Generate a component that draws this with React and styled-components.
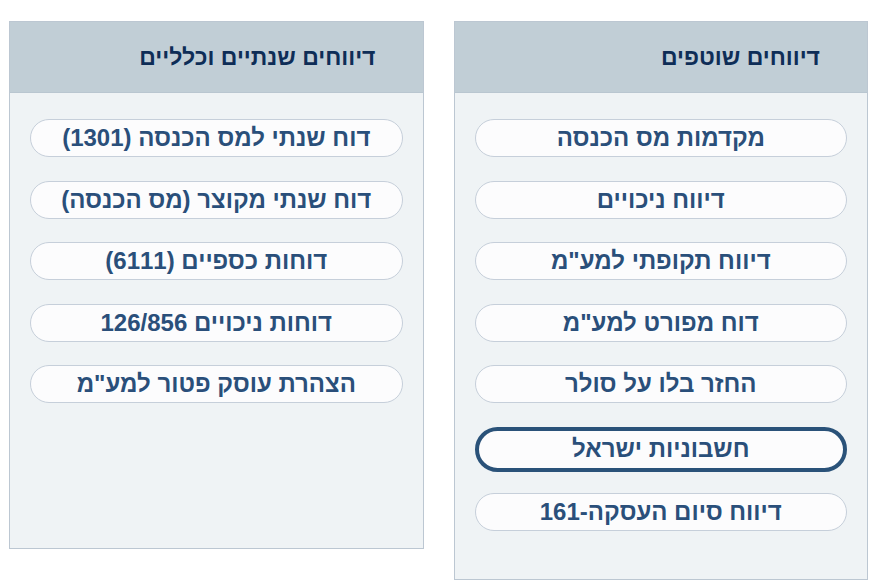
import React from "react";
import styled, { createGlobalStyle } from "styled-components";

const Global = createGlobalStyle`
  html, body { margin: 0; padding: 0; background: #ffffff; }
  body { font-family: "Liberation Sans", Arial, sans-serif; }
`;

const Page = styled.div`
  direction: rtl;
  display: flex;
  align-items: flex-start;
  gap: 30px;
  padding: 21px 5px 0 9px;
  width: 873px;
  box-sizing: border-box;
`;

const Panel = styled.section`
  width: 415px;
  box-sizing: border-box;
  border: 1px solid #bcc7d2;
  background: #eff3f5;
`;

const Header = styled.div`
  height: 71px;
  box-sizing: border-box;
  background: #c1ced6;
  border-bottom: 1px solid #b9c6d0;
  display: flex;
  align-items: center;
  padding: 0 47px 0 20px;
  color: #0e2d57;
  font-weight: 700;
  font-size: 23px;
`;

const Body = styled.div`
  display: flex;
  flex-direction: column;
  gap: 23.5px;
  padding: 26px 20px 48px 20px;
  min-height: ${(p) => p.$minHeight || 0}px;
  box-sizing: border-box;
`;

const Item = styled.button`
  direction: rtl;
  height: ${(p) => (p.$active ? 45 : 38)}px;
  margin: ${(p) => (p.$active ? "0 0 -2px" : "0")};
  box-sizing: border-box;
  border-radius: 24px;
  border: ${(p) => (p.$active ? "4px solid #2a5279" : "1px solid #c6cfda")};
  background: #fcfcfd;
  color: #2a4f7a;
  font-family: "Liberation Sans", Arial, sans-serif;
  font-weight: 700;
  font-size: 24px;
  display: flex;
  align-items: center;
  justify-content: center;
  padding: 0 10px;
  cursor: pointer;
`;

const shared = [
  "מקדמות מס הכנסה",
  "דיווח ניכויים",
  'דיווח תקופתי למע"מ',
  'דוח מפורט למע"מ',
  "החזר בלו על סולר",
  "חשבוניות ישראל",
  "דיווח סיום העסקה-161",
];

const annual = [
  "דוח שנתי למס הכנסה (1301)",
  "דוח שנתי מקוצר (מס הכנסה)",
  "דוחות כספיים (6111)",
  "דוחות ניכויים 126/856",
  'הצהרת עוסק פטור למע"מ',
];

export default function App() {
  return (
    <>
      <Global />
      <Page>
        <Panel>
          <Header>דיווחים שוטפים</Header>
          <Body>
            {shared.map((t, i) => (
              <Item key={t} $active={i === 5}>
                {t}
              </Item>
            ))}
          </Body>
        </Panel>
        <Panel>
          <Header>דיווחים שנתיים וכלליים</Header>
          <Body $minHeight={455}>
            {annual.map((t) => (
              <Item key={t}>{t}</Item>
            ))}
          </Body>
        </Panel>
      </Page>
    </>
  );
}
